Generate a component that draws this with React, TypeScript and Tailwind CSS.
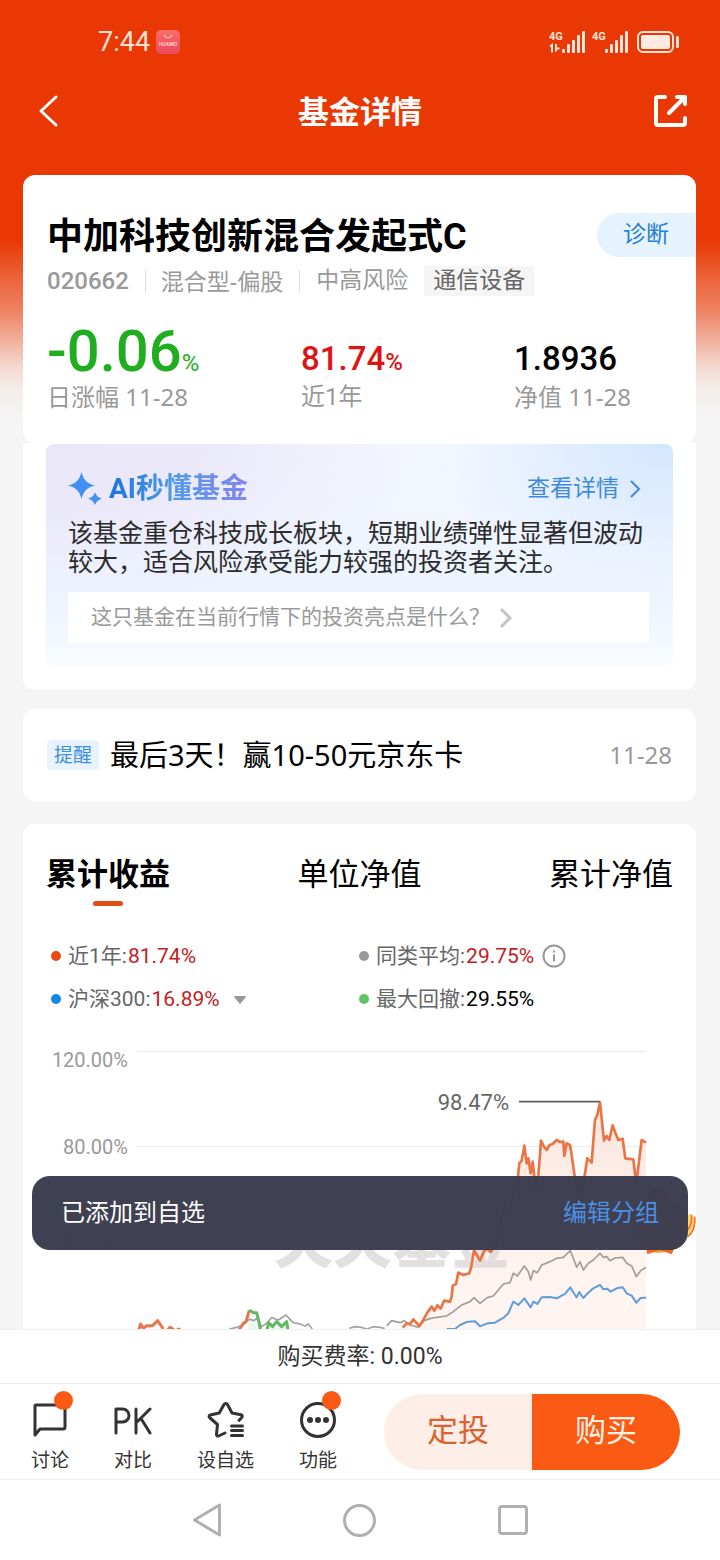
import React from "react";

type Stat = { label: string; color: string; value: string; red?: boolean; extra?: "info" | "caret" };

const stats: Stat[] = [
  { label: "近1年:", color: "bg-[#ea4a12]", value: "81.74%", red: true },
  { label: "同类平均:", color: "bg-[#999999]", value: "29.75%", red: true, extra: "info" },
  { label: "沪深300:", color: "bg-[#1585e8]", value: "16.89%", red: true, extra: "caret" },
  { label: "最大回撤:", color: "bg-[#5fc663]", value: "29.55%" },
];

const fundLine =
  "8,893 20,880 30,882 40,868 58,888 70,870 82,848 95,830 103,842 112,826 122,836 132,812 150,815 155,800 158,768 168,762 175,728 190,735 208,730 214,710 222,660 240,692 252,664 262,656 272,666 290,640 298,590 315,530 325,550 345,480 352,460 358,400 365,392 373,347 380,400 385,385 392,430 398,395 404,450 408,475 415,435 418,400 423,332 432,350 440,360 448,346 458,342 470,330 480,336 490,335 493,378 500,340 510,345 515,375 520,410 530,480 537,465 545,505 552,450 562,385 575,398 585,270 592,255 600,217 612,332 620,318 628,330 638,286 646,308 655,330 668,326 676,385 700,388 709,460 725,330 738,338";

const averageLine =
  "-40,888 -25,872 0,878 12,872 30,885 55,892 72,872 90,866 110,862 140,858 160,845 185,825 210,815 222,803 240,820 262,803 280,798 295,780 310,762 330,758 340,730 352,738 373,708 385,725 392,750 400,722 412,728 425,705 450,695 470,685 490,682 511,662 522,690 530,712 540,695 550,720 565,700 580,690 600,670 610,682 620,680 630,692 645,684 668,682 680,700 695,708 709,740 722,722 738,712";

const indexLine =
  "140,897 165,897 180,885 200,876 225,874 240,889 262,880 285,878 310,864 325,850 340,815 355,825 373,805 392,832 400,815 412,822 425,802 450,801 470,805 495,792 511,772 525,795 530,802 538,786 550,804 565,788 580,775 600,765 610,778 622,776 632,785 650,775 668,772 680,790 695,797 709,818 722,804 738,803";

function StatusBar() {
  return (
    <div className="flex h-[84px] items-center pl-[98px] pr-[41px] text-[#ffe3d6]">
      <span className="text-[27px] leading-8">7:44</span>
      <svg className="ml-[6px] h-6 w-6" viewBox="0 0 24 24">
        <defs>
          <linearGradient id="app" x1="0" y1="0" x2="0" y2="1">
            <stop offset="0" stopColor="#fa6c6a" />
            <stop offset="1" stopColor="#e9485c" />
          </linearGradient>
        </defs>
        <rect width="24" height="24" rx="5" fill="url(#app)" />
        <path d="M8.5 4.5a3.5 3.5 0 0 0 7 0" fill="none" stroke="#ffc9c4" strokeWidth="1" />
        <text x="12" y="15.5" textAnchor="middle" fontSize="5" fontWeight="700" fill="#ffc9c4">
          HUAWEI
        </text>
      </svg>
      <svg className="ml-auto h-[26px] w-[130px]" viewBox="0 0 130 26" fill="currentColor">
        <g fontSize="11" fontWeight="700">
          <text x="0" y="11">4G</text>
          <text x="43" y="11">4G</text>
        </g>
        <path d="M1 17.500l2-1.500v7.500M7 15v7.500M7 19.500h3.500" fill="none" stroke="currentColor" strokeWidth="2" />
        {[13, 56].map((x) => (
          <g key={x}>
            <rect x={x} y="20" width="3" height="4" rx="1" />
            <rect x={x + 5} y="15" width="3" height="9" rx="1" />
            <rect x={x + 10} y="11" width="3" height="13" rx="1" />
            <rect x={x + 15} y="6" width="3" height="18" rx="1" />
            <rect x={x + 20} y="2" width="3" height="22" rx="1" />
          </g>
        ))}
        <rect x="89" y="3" width="35" height="20" rx="5" fill="none" stroke="currentColor" strokeWidth="2" />
        <rect x="92" y="6" width="29" height="14" rx="2" fill="#ffebe3" />
        <rect x="127" y="7" width="3" height="12" rx="1.500" />
      </svg>
    </div>
  );
}

function Header() {
  return (
    <header className="flex h-[54px] items-center justify-between pl-9 pr-8 text-white">
      <button aria-label="返回" className="flex w-8 items-center">
        <svg className="h-9 w-6" viewBox="0 0 24 36" fill="none" stroke="currentColor" strokeWidth="3" strokeLinecap="round" strokeLinejoin="round">
          <path d="M20 4L5 18l15 14" />
        </svg>
      </button>
      <h1 className="pt-1 text-[31px] font-bold leading-10">基金详情</h1>
      <button aria-label="分享">
        <svg className="h-9 w-9" viewBox="0 0 36 36" fill="none" stroke="currentColor" strokeWidth="4" strokeLinecap="round" strokeLinejoin="round">
          <path d="M13 4H6a2 2 0 0 0-2 2v24a2 2 0 0 0 2 2h25a2 2 0 0 0 2-2v-5M25 4h8v7M33 4L17 20" />
        </svg>
      </button>
    </header>
  );
}

function Summary() {
  return (
    <section className="mt-[37px] h-[268px] rounded-xl bg-white pl-6">
      <div className="flex items-center justify-between pt-[34px]">
        <h2 className="pt-1 text-[36px] font-bold leading-[48px] text-black">中加科技创新混合发起式C</h2>
        <a href="#diagnose" className="flex h-11 w-[99px] items-center rounded-l-full bg-[#e5f3ff] pl-[26px] text-[23px] text-[#1f80cf]">
          诊断
        </a>
      </div>
      <div className="mt-[5px] flex h-[30px] items-center text-[23px] leading-[30px] text-[#999999]">
        <span className="text-[24px] font-medium">020662</span>
        <span className="ml-4 mr-[15px] h-[23px] w-px bg-[#dddddd]" />
        <span className="font-['Noto_Sans','Noto_Sans_CJK_SC',sans-serif]">混合型-偏股</span>
        <span className="mx-4 h-[23px] w-px bg-[#dddddd]" />
        <span>中高风险</span>
        <span className="ml-4 bg-[#f5f5f5] px-[9px] text-[#666666]">通信设备</span>
      </div>
      <dl className="mt-[26px] grid grid-cols-[254px_213px_1fr] text-[24px] text-[#999999]">
        <div className="flex flex-col-reverse">
          <dt className="mt-[2px] font-['Noto_Sans','Noto_Sans_CJK_SC',sans-serif] leading-8">日涨幅 11-28</dt>
          <dd className="flex h-[57px] items-baseline text-[58px] font-medium leading-[58px] text-[#20ad20]">
            -0.06<span className="text-[24px] font-normal">%</span>
          </dd>
        </div>
        <div className="flex flex-col-reverse">
          <dt className="mt-[2px] leading-8">近1年</dt>
          <dd className="flex h-10 items-baseline text-[33px] font-medium leading-10 text-[#dc1414]">
            81.74<span className="text-[24px]">%</span>
          </dd>
        </div>
        <div className="flex flex-col-reverse">
          <dt className="mt-[2px] font-['Noto_Sans','Noto_Sans_CJK_SC',sans-serif] leading-8">净值 11-28</dt>
          <dd className="h-10 text-[33px] font-medium leading-10 text-black">1.8936</dd>
        </div>
      </dl>
    </section>
  );
}

function AiPanel() {
  return (
    <section className="rounded-b-xl bg-white px-[23px] pb-6 pt-px">
      <div className="rounded-lg bg-[radial-gradient(240px_140px_at_100%_0%,#d3e6ff_0%,#d3e6ff00_100%),radial-gradient(380px_170px_at_0%_0%,#e9e6f8_0%,#ebe9f9_40%,#ebe9f900_100%),linear-gradient(#f4f7ff_0%,#edf4ff_65%,#f1f7ff_85%,#fafcff_100%)] pb-[23px] pl-[22px] pr-6 pt-[26px]">
        <div className="flex h-[38px] items-center">
          <svg className="h-[34px] w-[35px]" viewBox="0 0 35 34" fill="#3f8ff5">
            <path d="M13.500 0c2 8 5.500 11.500 13.500 13.500C19 15.500 15.500 19 13.500 27 11.500 19 8 15.500 0 13.500 8 11.500 11.500 8 13.500 0z" />
            <path d="M27 20c1.500 4 3 5.500 7 6.500-4 1.500-5.500 3-7 6.500-1.500-3.500-3-5-7-6.500 4-1 5.500-2.500 7-6.500z" />
          </svg>
          <h3 className="ml-[6px] bg-[linear-gradient(90deg,#1c73e0_0%,#4d9bea_45%,#8585ee_100%)] bg-clip-text text-[28px] font-bold leading-[38px] text-transparent">
            AI秒懂基金
          </h3>
          <a href="#detail" className="ml-auto flex items-center text-[23px] leading-8 text-[#3f8ae0]">
            查看详情
            <svg className="ml-[10px] h-5 w-5" viewBox="0 0 20 20" fill="none" stroke="currentColor" strokeWidth="2">
              <path d="M2 2l8 8-8 8" />
            </svg>
          </a>
        </div>
        <p className="mt-[11px] text-[25px] leading-[29px] text-[#2b2b2b]">
          该基金重仓科技成长板块，短期业绩弹性显著但波动较大，适合风险承受能力较强的投资者关注。
        </p>
        <button className="mt-[15px] flex h-[51px] w-full items-center bg-white pl-[23px] text-[21px] text-[#999999]">
          这只基金在当前行情下的投资亮点是什么？
          <svg className="ml-[6px] h-6 w-6" viewBox="0 0 24 24" fill="none" stroke="#c4c4c4" strokeWidth="3">
            <path d="M5 3l9 9-9 9" />
          </svg>
        </button>
      </div>
    </section>
  );
}

function Notice() {
  return (
    <a
      href="#notice"
      className="mt-[19px] flex h-[92px] items-center rounded-xl bg-white px-6 font-['Noto_Sans','Noto_Sans_CJK_SC',sans-serif]"
    >
      <span className="rounded bg-[#e8f3ff] px-[7px] text-[19px] leading-[30px] text-[#3f8fdd]">提醒</span>
      <span className="ml-[11px] text-[29px] leading-10 text-black">最后3天！赢10-50元京东卡</span>
      <time className="ml-auto text-[24px] leading-8 text-[#999999]">11-28</time>
    </a>
  );
}

function Chart() {
  return (
    <svg className="block w-full" viewBox="0 0 673 320" role="img" aria-label="累计收益走势">
      <defs>
        <linearGradient id="area" x1="0" y1="0" x2="0" y2="1">
          <stop offset="0" stopColor="#fce6df" />
          <stop offset="0.6" stopColor="#fef2ee" />
          <stop offset="1" stopColor="#fef6f3" />
        </linearGradient>
      </defs>
      <path d="M114 21.500h509M114 116.500h509M114 211.500h509" stroke="#ebebeb" />
      <g fontSize="20" fill="#999999" textAnchor="end">
        <text x="105" y="37">120.00%</text>
        <text x="105" y="124">80.00%</text>
        <text x="105" y="219">40.00%</text>
      </g>
      <g transform="translate(377 0) scale(0.3333)">
        <polygon points={`${fundLine} 738,960 8,960`} fill="url(#area)" />
      </g>
      <text x="251" y="233" fontSize="59" fontWeight="900" fill="#d9d6d5" fillOpacity="0.75">
        天天基金
      </text>
      <g transform="translate(377 0) scale(0.3333)" fill="none" strokeLinejoin="round">
        <polyline points={averageLine} stroke="#a39c99" strokeWidth="5" />
        <polyline points={indexLine} stroke="#5f9ddb" strokeWidth="6" />
        <polyline points={fundLine} stroke="#ea7443" strokeWidth="8" />
        <path d="M357 215H600" stroke="#5c5f58" strokeWidth="5" />
        {/* mascot */}
        <ellipse cx="775" cy="510" rx="34" ry="34" fill="#e0481c" />
        <circle cx="776" cy="585" r="84" fill="#f7a13a" />
        <path d="M850 560q30-20 36 16 2 26-22 44z" fill="#ffd76a" />
        <path d="M864 600q14-22 10-46M864 620q24-20 20-60" stroke="#f2743a" strokeWidth="5" />
        <path d="M738 650l4 23 38-12 36 12 8-23z" fill="#f06a1f" />
      </g>
      <g transform="translate(-23 120) scale(0.3333)" fill="none" strokeLinejoin="round">
        <path d="M748 500l30 20 4 40h-42zM800 560l6-35h55l6 35z" fill="#eef8ee" />
        <path
          d="M688 537l22-5 20-7 18-17 14 4 8-7 15 25 15-10 15-17 20 7 23-15 12 13 10 10 20 4 15 6 10-6 12 15M1048 535l17-5 20 2 15 6 20-8 20 2 14 4"
          stroke="#a3a3a3"
          strokeWidth="5"
        />
        <path d="M416 540l6-18 8 13 10-8h18l15-15 17 25M503 540l7-8 12 7M530 538h12M716 542l14-22 8-5 10-34" stroke="#e8764a" strokeWidth="9" />
        <path d="M748 480l12 8h10l8 32 4 24M800 545l6-27 12 12 12-15 15 15 15-15 5 30" stroke="#63b861" strokeWidth="9" />
      </g>
      <text x="486" y="80" fontSize="22" fill="#666666" textAnchor="end">
        98.47%
      </text>
    </svg>
  );
}

function Performance() {
  return (
    <section className="mt-[23px] rounded-t-xl bg-white">
      <div className="flex justify-between px-[23px] pt-[30px] text-[31px] leading-[42px] text-black">
        <button className="flex flex-col items-center font-bold">
          累计收益
          <span className="mt-[5px] h-[5px] w-[30px] rounded-full bg-[#e04e14]" />
        </button>
        <button className="self-start">单位净值</button>
        <button className="self-start">累计净值</button>
      </div>
      <ul className="mt-9 grid grid-cols-[308px_1fr] gap-y-[15px] pl-7 text-[21px] leading-7 text-[#666666]">
        {stats.map((s) => (
          <li key={s.label} className="flex items-center">
            <span className={`mr-[7px] h-[10px] w-[10px] rounded-full ${s.color}`} />
            {s.label}
            <span className={s.red ? "ml-px text-[#c4201f]" : "ml-px text-black"}>{s.value}</span>
            {s.extra === "info" && (
              <svg className="ml-2 h-6 w-6" viewBox="0 0 24 24" fill="none" stroke="#999999" strokeWidth="2">
                <circle cx="12" cy="12" r="10.500" />
                <path d="M12 10.500v7M12 6.500v2" />
              </svg>
            )}
            {s.extra === "caret" && (
              <svg className="ml-[14px] h-[9px] w-3" viewBox="0 0 12 9" fill="#999999">
                <path d="M1 1h10a1 1 0 0 1 .5 1.500L7 8q-1 1-2 0L.5 2.500A1 1 0 0 1 1 1z" />
              </svg>
            )}
          </li>
        ))}
      </ul>
      <div className="mt-[17px]">
        <Chart />
      </div>
    </section>
  );
}

function Dot() {
  return <span className="absolute -top-[10px] left-[23px] h-[19px] w-[19px] rounded-full bg-[#fb5a14]" />;
}

function BottomBar() {
  return (
    <footer className="bg-white text-[#333333]">
      <p className="border-t border-[#eeeeee] text-center text-[23px] leading-[53px]">购买费率: 0.00%</p>
      <div className="flex h-24 items-center justify-between border-t border-[#eaeaea] pl-[31px] pr-10">
        <nav className="flex gap-[45px] pt-3 text-[19px] leading-7">
          <button className="flex flex-col items-center">
            <span className="relative">
              <svg className="h-[38px] w-[38px]" viewBox="0 0 38 38" fill="none" stroke="currentColor" strokeWidth="3" strokeLinejoin="round">
                <path d="M5 4h27a2 2 0 0 1 2 2v20a2 2 0 0 1-2 2H9l-5 6V5a1 1 0 0 1 1-1z" />
              </svg>
              <Dot />
            </span>
            <span className="mt-2">讨论</span>
          </button>
          <button className="flex flex-col items-center">
            <svg className="h-[38px] w-[38px]" viewBox="0 0 38 38" fill="none" stroke="currentColor" strokeWidth="3" strokeLinecap="round" strokeLinejoin="round">
              <path d="M2 32V8h6.500a6.500 6.500 0 0 1 0 13H2M22 8v24M36 8L22 22M27 17.500L36 32" />
            </svg>
            <span className="mt-2">对比</span>
          </button>
          <button className="flex flex-col items-center">
            <svg className="h-[38px] w-[38px]" viewBox="0 0 38 38" fill="none" stroke="currentColor" strokeWidth="3" strokeLinecap="round" strokeLinejoin="round">
              <path d="M18 32l-6.500 3a1.500 1.500 0 0 1-2-1.500l1-10-8-7a1.500 1.500 0 0 1 .7-2.500l9-2L17 3.500a2 2 0 0 1 3.500 0L25 12l9 1.800a1.500 1.500 0 0 1 .9 2.500L32 19.500M24.500 25h11M24.500 29.500h11M24.500 34.500h11" />
            </svg>
            <span className="mt-2">设自选</span>
          </button>
          <button className="flex flex-col items-center">
            <span className="relative">
              <svg className="h-[38px] w-[38px]" viewBox="0 0 38 38" fill="none" stroke="currentColor" strokeWidth="3">
                <circle cx="19" cy="19" r="16.500" />
                <g fill="currentColor" stroke="none">
                  <circle cx="11" cy="19" r="3" />
                  <circle cx="19" cy="19" r="3" />
                  <circle cx="27" cy="19" r="3" />
                </g>
              </svg>
              <Dot />
            </span>
            <span className="mt-2">功能</span>
          </button>
        </nav>
        <div className="flex h-[76px] w-[296px] overflow-hidden rounded-full text-[31px]">
          <button className="flex-1 bg-[#fdeee8] text-[#d9622f]">定投</button>
          <button className="flex-1 bg-[#fb5a14] text-[#fff1e4]">购买</button>
        </div>
      </div>
      <nav className="flex h-[81px] items-center justify-center gap-[122px] border-t border-[#eeeeee] text-[#b0b0b0]">
        <button aria-label="后退">
          <svg className="h-[34px] w-7" viewBox="0 0 28 34" fill="none" stroke="currentColor" strokeWidth="3" strokeLinejoin="round">
            <path d="M26.500 2v30L1.500 17z" />
          </svg>
        </button>
        <button aria-label="主页" className="h-[33px] w-[33px] rounded-full border-3 border-current" />
        <button aria-label="最近任务" className="h-[30px] w-[30px] rounded border-3 border-current" />
      </nav>
    </footer>
  );
}

export default function App() {
  return (
    <div className="flex h-screen flex-col bg-[#f5f5f5] font-[Roboto,'Noto_Sans_CJK_SC',sans-serif]">
      <main className="relative min-h-0 flex-1 overflow-hidden bg-[linear-gradient(#e93803_0px,#e93803_240px,#ea5a2f_270px,#ee8263_310px,#f1b09c_340px,#f3d9d0_367px,#f4eeeb_390px,#f5f5f5_420px)]">
        <StatusBar />
        <Header />
        <div className="pl-[23px] pr-6">
          <Summary />
          <AiPanel />
          <Notice />
          <Performance />
        </div>
        <div role="status" className="absolute inset-x-8 bottom-[79px] flex h-[74px] items-center justify-between rounded-[18px] bg-[#3b3d50]/98 px-[29px] text-[24px] text-white">
          已添加到自选
          <button className="text-[#4a8fe2]">编辑分组</button>
        </div>
      </main>
      <BottomBar />
    </div>
  );
}
